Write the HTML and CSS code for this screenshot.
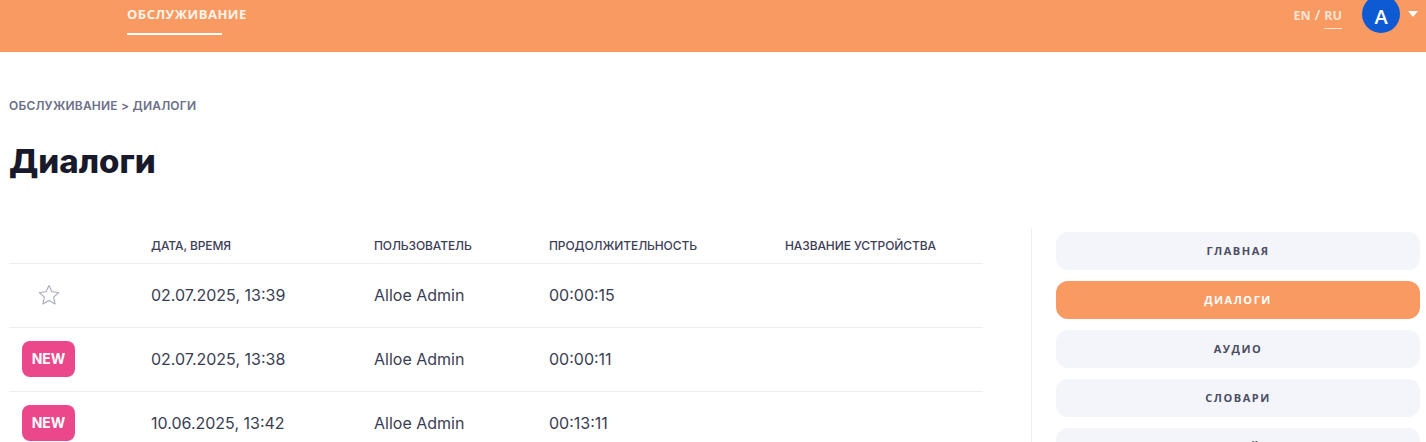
FILE: index.html
```html
<!DOCTYPE html>
<html lang="ru">
<head>
    <meta charset="UTF-8">
    <meta name="viewport" content="width=device-width, initial-scale=1.0">
    <title>Диалоги</title>
    <link rel="stylesheet" href="styles.css">
</head>
<body>
    <header class="topbar">
        <nav class="topbar-nav">
            <a href="#" class="topbar-link active">Обслуживание</a>
        </nav>
        <div class="topbar-right">
            <div class="lang">
                <span class="lang-item">EN</span>
                <span class="lang-sep">/</span>
                <span class="lang-item current">RU</span>
            </div>
            <div class="avatar">A</div>
            <span class="caret"></span>
        </div>
    </header>

    <main class="page">
        <div class="breadcrumb">Обслуживание &gt; Диалоги</div>
        <h1 class="page-title">Диалоги</h1>

        <div class="content">
            <div class="table-wrap">
                <table class="dialogs">
                    <thead>
                        <tr>
                            <th class="col-mark"></th>
                            <th class="col-date">Дата, время</th>
                            <th class="col-user">Пользователь</th>
                            <th class="col-dur">Продолжительность</th>
                            <th class="col-device">Название устройства</th>
                        </tr>
                    </thead>
                    <tbody>
                        <tr>
                            <td class="col-mark">
                                <svg class="star" viewBox="0 0 24 24" width="24" height="24">
                                    <path d="M12 2.5l2.9 6.3 6.8.7-5.1 4.6 1.5 6.8L12 17.4l-6.1 3.5 1.5-6.8-5.1-4.6 6.8-.7z" fill="none" stroke="#a9abbd" stroke-width="1.1" stroke-linejoin="round"/>
                                </svg>
                            </td>
                            <td>02.07.2025, 13:39</td>
                            <td>Alloe Admin</td>
                            <td>00:00:15</td>
                            <td></td>
                        </tr>
                        <tr>
                            <td class="col-mark"><span class="badge">NEW</span></td>
                            <td>02.07.2025, 13:38</td>
                            <td>Alloe Admin</td>
                            <td>00:00:11</td>
                            <td></td>
                        </tr>
                        <tr>
                            <td class="col-mark"><span class="badge">NEW</span></td>
                            <td>10.06.2025, 13:42</td>
                            <td>Alloe Admin</td>
                            <td>00:13:11</td>
                            <td></td>
                        </tr>
                    </tbody>
                </table>
            </div>

            <aside class="sidebar">
                <a href="#" class="side-btn">Главная</a>
                <a href="#" class="side-btn active">Диалоги</a>
                <a href="#" class="side-btn">Аудио</a>
                <a href="#" class="side-btn">Словари</a>
                <a href="#" class="side-btn">Настройки</a>
            </aside>
        </div>
    </main>
</body>
</html>
```

FILE: styles.css
```css
* {
    margin: 0;
    padding: 0;
    box-sizing: border-box;
}

body {
    font-family: 'Inter', 'Noto Sans', sans-serif;
    background: #ffffff;
    color: #3a3d52;
    overflow: hidden;
}

a {
    text-decoration: none;
    color: inherit;
}

/* top bar */
.topbar {
    height: 52px;
    background: #f99a62;
    display: flex;
    justify-content: space-between;
    padding-left: 127px;
    padding-right: 8px;
}

.topbar-link {
    display: block;
    position: relative;
    margin-top: 6px;
    font-family: 'Open Sans', sans-serif;
    font-size: 13px;
    font-weight: 700;
    line-height: 16px;
    letter-spacing: 0.5px;
    color: #fff3ea;
    text-transform: uppercase;
}

.topbar-link.active::after {
    content: '';
    position: absolute;
    left: 0;
    top: 27px;
    width: 95px;
    height: 2px;
    background: #ffffff;
}

.topbar-right {
    display: flex;
    align-items: flex-start;
}

.lang {
    display: flex;
    align-items: baseline;
    gap: 4px;
    margin-top: 6px;
    font-family: 'Open Sans', sans-serif;
    font-size: 12.5px;
    font-weight: 700;
    line-height: 16px;
    color: #fde4d3;
}

.lang-sep {
    color: #ffffff;
    font-size: 15px;
    font-weight: 400;
}

.lang-item.current {
    position: relative;
}

.lang-item.current::after {
    content: '';
    position: absolute;
    left: 0;
    right: 0;
    top: 20px;
    height: 1px;
    background: #fde4d3;
}

.avatar {
    width: 38px;
    height: 38px;
    margin-top: -5px;
    margin-left: 20px;
    border-radius: 50%;
    background: #0e5ad3;
    color: #ffffff;
    display: flex;
    justify-content: center;
    align-items: center;
    padding-top: 5px;
    font-family: 'Open Sans', sans-serif;
    font-size: 20px;
    font-weight: 600;
}

.caret {
    margin-top: 11px;
    margin-left: 8px;
    width: 0;
    height: 0;
    border-left: 5px solid transparent;
    border-right: 5px solid transparent;
    border-top: 6px solid #ffffff;
}

/* page */
.page {
    padding: 46px 6px 0 9px;
}

.breadcrumb {
    font-size: 12px;
    font-weight: 600;
    line-height: 16px;
    letter-spacing: 0.2px;
    color: #6c6f87;
    text-transform: uppercase;
}

.page-title {
    margin-top: 27px;
    font-size: 33px;
    font-weight: 800;
    line-height: 40px;
    color: #181a2c;
}

.content {
    display: flex;
    margin-top: 47px;
}

.table-wrap {
    width: 974px;
}

.dialogs {
    width: 100%;
    border-collapse: collapse;
    table-layout: fixed;
}

.dialogs th {
    height: 35px;
    text-align: left;
    font-size: 12px;
    font-weight: 500;
    color: #3d4058;
    text-transform: uppercase;
    letter-spacing: -0.1px;
    border-bottom: 1px solid #eeeff3;
}

.dialogs td {
    height: 64px;
    font-size: 16px;
    color: #3a3d52;
    border-bottom: 1px solid #eeeff3;
    vertical-align: middle;
}

.dialogs tbody tr:last-child td {
    border-bottom: none;
}

.col-mark {
    width: 142px;
}

.col-date {
    width: 223px;
}

.col-user {
    width: 175px;
}

.col-dur {
    width: 236px;
}

.dialogs td.col-mark {
    padding-left: 13px;
}

.star {
    display: block;
    margin-left: 15px;
}

.badge {
    display: inline-block;
    width: 53px;
    height: 36px;
    line-height: 36px;
    text-align: center;
    border-radius: 8px;
    background: #ea488a;
    color: #ffffff;
    font-size: 14px;
    font-weight: 700;
}

/* side menu */
.sidebar {
    flex: 1;
    margin-left: 48px;
    padding: 4px 0 0 24px;
    border-left: 1px solid #eeeff3;
    display: flex;
    flex-direction: column;
    gap: 11px;
}

.side-btn {
    display: block;
    height: 38px;
    line-height: 38px;
    border-radius: 12px;
    background: #f4f5fb;
    text-align: center;
    font-family: 'Open Sans', sans-serif;
    font-size: 11px;
    font-weight: 700;
    letter-spacing: 1.5px;
    color: #4b4e62;
    text-transform: uppercase;
}

.side-btn.active {
    background: #f99a62;
    color: #ffffff;
}
```
